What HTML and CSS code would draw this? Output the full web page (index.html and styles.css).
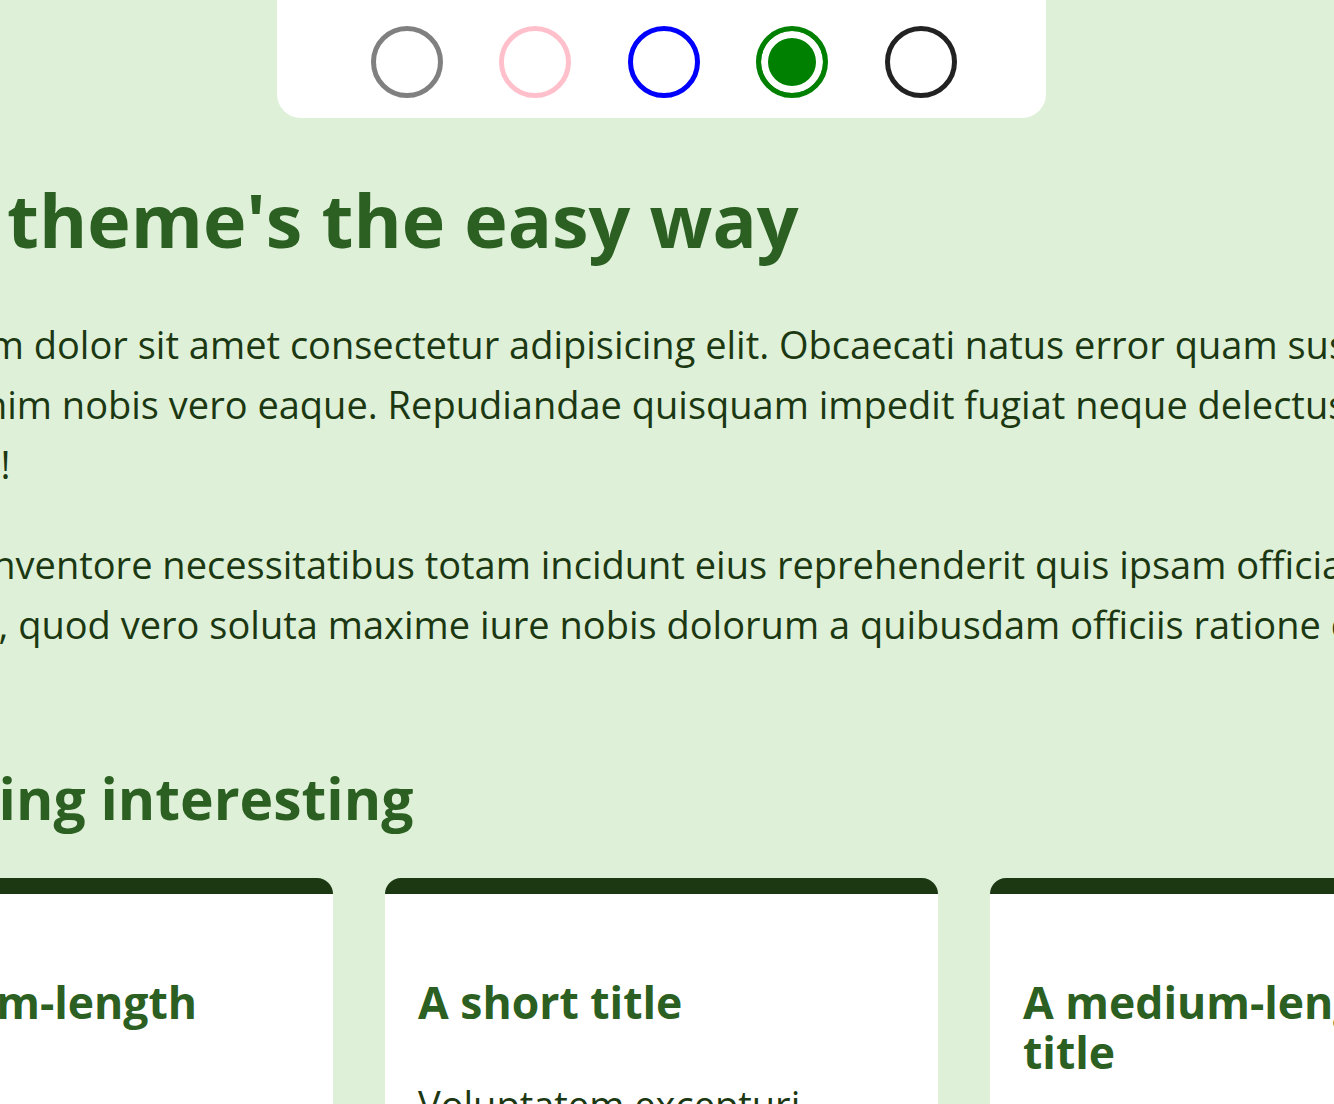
FILE: index.html
```html
<!DOCTYPE html>
<html lang="en">
<head>
<meta charset="utf-8">
<title>Theme switcher</title>
<link rel="stylesheet" href="styles.css">
</head>
<body>
<div class="page">
  <form class="theme-picker" aria-label="Choose a theme">
    <input class="swatch swatch-gray" type="radio" name="theme" value="gray" aria-label="Gray">
    <input class="swatch swatch-pink" type="radio" name="theme" value="pink" aria-label="Pink">
    <input class="swatch swatch-blue" type="radio" name="theme" value="blue" aria-label="Blue">
    <input class="swatch swatch-green" type="radio" name="theme" value="green" aria-label="Green" checked>
    <input class="swatch swatch-dark" type="radio" name="theme" value="dark" aria-label="Dark">
  </form>

  <main class="content">
    <h1 class="title">Apply theme's the easy way</h1>
    <p class="lead">Lorem, ipsum dolor sit amet consectetur adipisicing elit. Obcaecati natus error quam suscipit dolores<br>molestiae enim nobis vero eaque. Repudiandae quisquam impedit fugiat neque delectus rerum quas<br>voluptatibus!</p>
    <p class="lead">Dicta, ipsa. Inventore necessitatibus totam incidunt eius reprehenderit quis ipsam officia deserunt<br>doloremque, quod vero soluta maxime iure nobis dolorum a quibusdam officiis ratione cumque.</p>

    <h2 class="section-title">Something interesting</h2>
    <div class="cards">
      <article class="card">
        <h3 class="card-title">A medium-length title</h3>
        <p class="card-text">Lorem ipsum dolor sit amet consectetur adipisicing elit.</p>
      </article>
      <article class="card">
        <h3 class="card-title">A short title</h3>
        <p class="card-text">Voluptatem excepturi consequuntur, sed dolore quidem.</p>
      </article>
      <article class="card">
        <h3 class="card-title">A medium-length title</h3>
        <p class="card-text">Quia iste eos accusamus voluptatum.</p>
      </article>
    </div>
  </main>
</div>
</body>
</html>
```

FILE: styles.css
```css
html, body {
  margin: 0;
  padding: 0;
  overflow: hidden;
}

body {
  background: #def1d8;
  color: #1c3812;
  font-family: "Open Sans", "Noto Sans", "Liberation Sans", sans-serif;
}

.page {
  width: 1323px;
  display: flex;
  flex-direction: column;
  align-items: center;
}

.theme-picker {
  width: 769px;
  box-sizing: border-box;
  padding: 26px 0 20px 4px;
  background: #ffffff;
  border-radius: 0 0 24px 24px;
  display: flex;
  justify-content: center;
  gap: 56.5px;
  margin: 0;
}

.swatch {
  appearance: none;
  -webkit-appearance: none;
  box-sizing: border-box;
  width: 72px;
  height: 72px;
  margin: 0;
  border: 5px solid;
  border-radius: 50%;
  background: #ffffff;
  flex: none;
}

.swatch-gray { border-color: #808080; }
.swatch-pink { border-color: #ffc0cb; }
.swatch-blue { border-color: #0000ff; }
.swatch-green { border-color: #008000; }
.swatch-dark { border-color: #222222; }

.swatch:checked {
  background: currentColor;
  box-shadow: inset 0 0 0 7px #ffffff;
}
.swatch-green:checked { color: #008000; }

.content {
  width: 1763px;
  flex: none;
}

.title {
  margin: 54px 0 46px;
  font-size: 73.5px;
  line-height: 96px;
  font-weight: 700;
  color: #2c5f22;
  white-space: nowrap;
}

.lead {
  margin: 0 0 40px;
  font-size: 38px;
  line-height: 60px;
  white-space: nowrap;
}

.section-title {
  margin: 110px 0 46px;
  font-size: 57px;
  line-height: 68px;
  font-weight: 700;
  color: #2c5f22;
}

.cards {
  display: grid;
  grid-template-columns: repeat(3, 553px);
  gap: 52px;
}

.card {
  background: #ffffff;
  border-top: 16px solid #1c3812;
  border-radius: 16px;
  padding: 32px 33px;
}

.card-title {
  margin: 51px 0 47px;
  font-size: 44.5px;
  line-height: 50px;
  font-weight: 700;
  color: #2c5f22;
}

.card-text {
  margin: 0;
  font-size: 38px;
  line-height: 60px;
}
```
